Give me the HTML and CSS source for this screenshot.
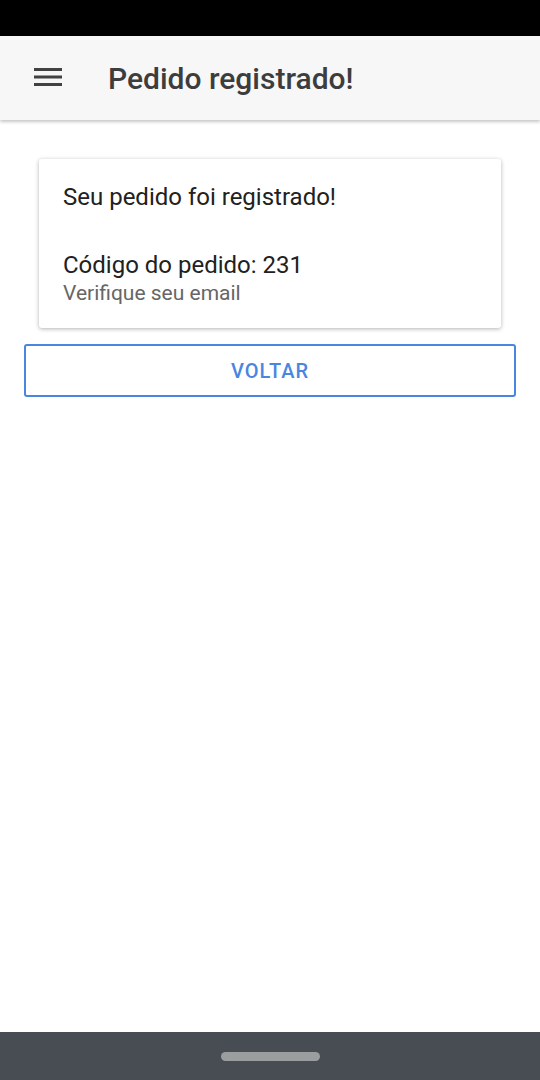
FILE: index.html
```html
<!DOCTYPE html>
<html lang="pt">
<head>
<meta charset="utf-8">
<link rel="stylesheet" href="styles.css">
</head>
<body>
<div class="screen">
  <div class="status"></div>
  <header class="appbar">
    <svg class="menu" width="28" height="20" viewBox="0 0 28 20"><rect x="0" y="1" width="28" height="3" fill="#424242"/><rect x="0" y="8.5" width="28" height="3" fill="#424242"/><rect x="0" y="16" width="28" height="3" fill="#424242"/></svg>
    <h1 class="title">Pedido registrado!</h1>
  </header>
  <main class="content">
    <div class="card">
      <p class="line">Seu pedido foi registrado!</p>
      <div class="block">
        <p class="line">Código do pedido: 231</p>
        <p class="sub">Verifique seu email</p>
      </div>
    </div>
    <button class="btn">VOLTAR</button>
  </main>
  <footer class="navbar"><span class="pill"></span></footer>
</div>
</body>
</html>
```
FILE: styles.css
```css
* { box-sizing: border-box; }
html, body { margin: 0; padding: 0; }
body { font-family: Roboto, "Noto Sans", sans-serif; background: #fff; }
.screen { width: 540px; height: 1080px; display: flex; flex-direction: column; overflow: hidden; }
.status { height: 36px; background: #000; flex: none; }
.appbar { height: 84px; flex: none; background: #f7f7f7; display: flex; align-items: center; padding-left: 34px; box-shadow: 0 2px 3px rgba(0,0,0,0.22); position: relative; z-index: 1; }
.menu { display: block; margin-top: -2px; }
.title { margin: 0 0 0 46px; font-size: 30px; font-weight: 500; color: #3d3d3d; letter-spacing: 0; }
.content { flex: 1; display: flex; flex-direction: column; padding: 39px 24px 0 24px; }
.card { margin: 0 15px; background: #fff; border-radius: 3px; box-shadow: 0 1px 4px rgba(0,0,0,0.3); padding: 23px 24px 22px 24px; }
.line { margin: 0; font-size: 24px; color: #212121; line-height: 30px; }
.block { margin-top: 38px; }
.sub { margin: 0; font-size: 21px; color: #666; line-height: 26px; }
.btn { margin-top: 16px; height: 53px; width: 100%; border: 2px solid #4a86e0; border-radius: 3px; background: #fff; color: #4a86e0; font-family: Roboto, sans-serif; font-size: 20px; font-weight: 500; letter-spacing: 1px; }
.navbar { height: 48px; flex: none; background: #474d53; display: flex; justify-content: center; align-items: center; }
.pill { width: 99px; height: 9px; border-radius: 5px; background: #9a9e9f; margin-top: 0; }
```
